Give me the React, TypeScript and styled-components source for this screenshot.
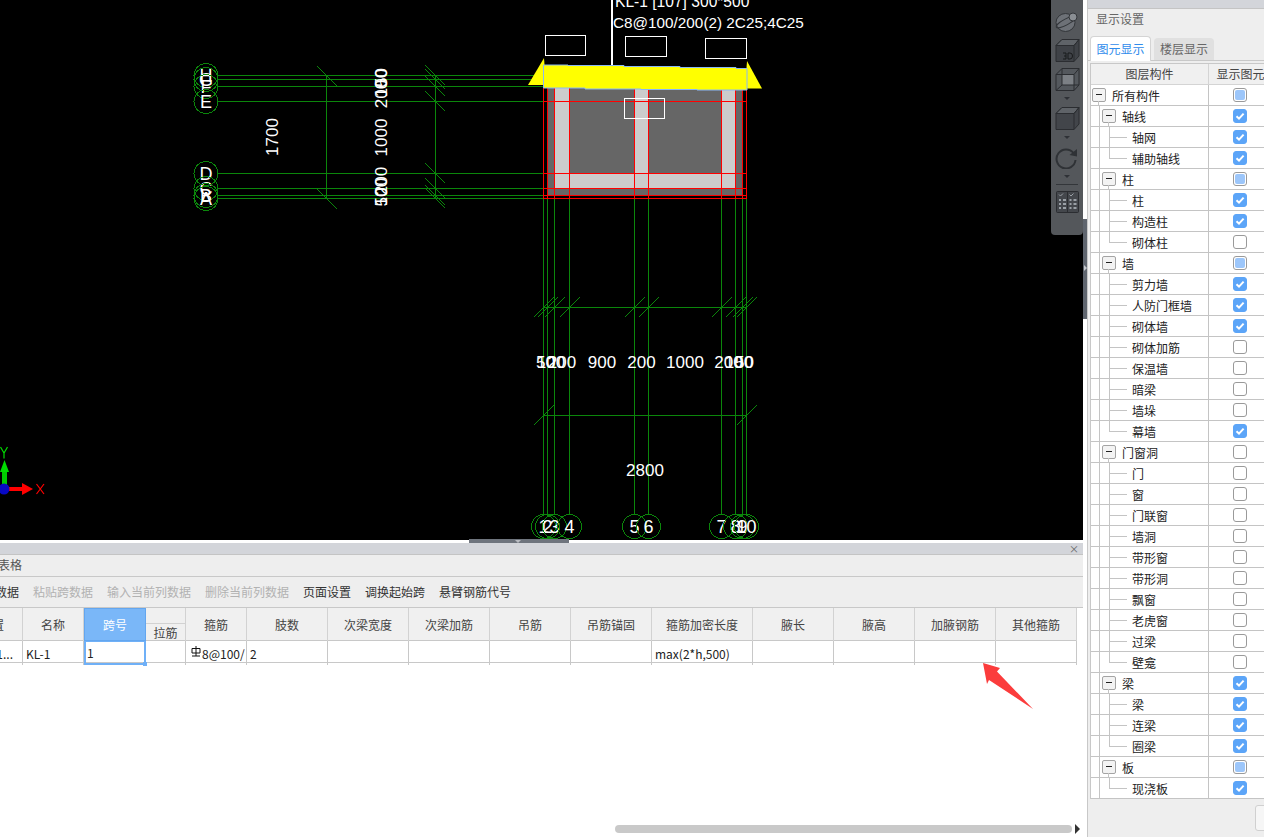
import React from "react";
import styled, { createGlobalStyle } from "styled-components";

const GlobalStyle = createGlobalStyle`
  html, body {
    margin: 0;
    height: 100%;
    overflow: hidden;
    background: #fff;
    font-family: "Noto Sans CJK SC", "Noto Sans", sans-serif;
    font-size: 12px;
    color: #333;
  }
`;

const Page = styled.div`
  display: flex;
  width: 1264px;
  height: 837px;
  overflow: hidden;
`;

const Main = styled.div`
  width: 1083px;
  flex: none;
  display: flex;
  flex-direction: column;
  overflow: hidden;
  position: relative;
`;

const Viewport = styled.div`
  position: relative;
  height: 540px;
  flex: none;
  background: #000;
  overflow: hidden;
`;

const Drawing = styled.svg`
  display: block;
  width: 1083px;
  height: 540px;
`;

const CadText = styled.text<{ $size?: number }>`
  font-family: "Liberation Sans", sans-serif;
  font-size: ${(p) => p.$size ?? 17}px;
  fill: #fff;
  text-anchor: middle;
`;

const CadLabel = styled(CadText)`
  text-anchor: start;
`;

const ViewTools = styled.div`
  position: absolute;
  top: 0;
  right: 0;
  width: 32px;
  height: 235px;
  background: #54575b;
  border-radius: 0 0 4px 4px;
  display: flex;
  flex-direction: column;
  align-items: center;
`;

const ToolIcon = styled.svg<{ $h: number; $top: number }>`
  display: block;
  width: 26px;
  height: ${(p) => p.$h}px;
  margin-top: ${(p) => p.$top}px;
  flex: none;
`;

const Caret = styled.div`
  width: 0;
  height: 0;
  margin-top: 6px;
  border-left: 3px solid transparent;
  border-right: 3px solid transparent;
  border-top: 3px solid #2e3136;
  flex: none;
`;

const ToolRule = styled.div`
  width: 22px;
  height: 1px;
  background: #33363a;
  margin: 6px 0 0;
  flex: none;
`;

const SplitHandle = styled.div`
  position: absolute;
  top: 539px;
  left: 469px;
  width: 100px;
  height: 4px;
  background: #6e747d;
  z-index: 2;

  &::after {
    content: "";
    position: absolute;
    left: 46px;
    top: 1px;
    border-left: 3px solid transparent;
    border-right: 3px solid transparent;
    border-top: 3px solid #b9bcc2;
  }
`;

const Grip = styled.div`
  height: 3px;
  flex: none;
  background: #fff;
`;

const PanelBar = styled.div`
  height: 11px;
  flex: none;
  background: #d3d5da;
  border-bottom: 1px solid #c4c4c4;
  display: flex;
  justify-content: flex-end;
  align-items: center;
  padding-right: 4px;
  font-size: 10px;
  line-height: 11px;
  color: #666;
`;

const TitleRow = styled.div`
  height: 21px;
  flex: none;
  background: #eee;
  border-bottom: 1px solid #c8c8c8;
  line-height: 20px;
  color: #555;
  padding-left: 0;
  text-indent: -2px;
`;

const ActionBar = styled.div`
  height: 30px;
  flex: none;
  background: #eee;
  border-bottom: 1px solid #c8c8c8;
  display: flex;
  align-items: center;
  gap: 14px;
  margin-left: -41px;
  line-height: 30px;
  white-space: nowrap;
`;

const Action = styled.span<{ $off?: boolean }>`
  color: ${(p) => (p.$off ? "#b2b2b2" : "#333")};
`;

const Sheet = styled.div`
  flex: 1;
  background: #fff;
  position: relative;
  overflow: hidden;
`;

const columns = "61px 61px 62px 40px 61px 81px 81px 81px 81px 81px 101px 81px 81px 81px 81px";

const HeadRow = styled.div`
  display: grid;
  grid-template-columns: ${columns};
  margin-left: -38px;
  width: 1115px;
  height: 33px;
  background: #f0f0f0;
  border-bottom: 1px solid #c8c8c8;
  box-sizing: border-box;
`;

const HeadCell = styled.div<{ $on?: boolean }>`
  box-sizing: border-box;
  display: flex;
  align-items: center;
  justify-content: center;
  border-right: 1px solid #d2d2d2;
  color: ${(p) => (p.$on ? "#fff" : "#444")};
  background: ${(p) => (p.$on ? "#7ab7f8" : "transparent")};
  ${(p) => p.$on && "border: 1px solid #63a6ef;"}
`;

const SplitHead = styled.div`
  box-sizing: border-box;
  display: flex;
  flex-direction: column;
  border-right: 1px solid #d2d2d2;
`;

const SplitTop = styled.div`
  height: 15px;
  flex: none;
  border-bottom: 1px solid #d2d2d2;
`;

const SplitBottom = styled.div`
  flex: 1;
  display: flex;
  align-items: center;
  justify-content: center;
  color: #444;
`;

const DataRow = styled.div`
  display: grid;
  grid-template-columns: ${columns};
  margin-left: -38px;
  width: 1115px;
  height: 22px;
  border-bottom: 1px solid #c8c8c8;
  box-sizing: border-box;
`;

const DataCell = styled.div`
  box-sizing: border-box;
  border-right: 1px solid #c8c8c8;
  padding-left: 3px;
  line-height: 21px;
  color: #222;
  white-space: nowrap;
  overflow: hidden;
  display: flex;
  align-items: center;
`;

const FirstCell = styled(DataCell)`
  justify-content: flex-end;
  padding: 0 9px 0 0;
`;

const ActiveCell = styled(DataCell)`
  border: 2px solid #6fb0f7;
  border-top-width: 1px;
  position: relative;
  overflow: visible;
  padding-left: 1px;

  &::after {
    content: "";
    position: absolute;
    right: -3px;
    bottom: -3px;
    width: 4px;
    height: 4px;
    background: #6fb0f7;
  }
`;

const Rebar = styled.svg`
  display: block;
  width: 10px;
  height: 12px;
  margin: 0 1px 3px 2px;
  flex: none;
`;

const ScrollThumb = styled.div`
  position: absolute;
  left: 615px;
  bottom: 4px;
  width: 457px;
  height: 8px;
  border-radius: 4px;
  background: #c9c9c9;
`;

const ScrollArrow = styled.div`
  position: absolute;
  left: 1075px;
  bottom: 3px;
  border-top: 5px solid transparent;
  border-bottom: 5px solid transparent;
  border-left: 5px solid #333;
`;

const Callout = styled.svg`
  position: absolute;
  left: 975px;
  top: 655px;
  width: 65px;
  height: 60px;
  z-index: 3;
`;

const Divider = styled.div`
  width: 5px;
  flex: none;
  background: #fff;
  border-right: 1px solid #c8c8c8;
  box-sizing: border-box;
  position: relative;
`;

const SideHandle = styled.div`
  position: absolute;
  left: 0;
  top: 219px;
  width: 4px;
  height: 100px;
  background: #5f656e;

  &::after {
    content: "";
    position: absolute;
    left: 1px;
    top: 46px;
    border-top: 3px solid transparent;
    border-bottom: 3px solid transparent;
    border-left: 3px solid #c4c7cc;
  }
`;

const Side = styled.div`
  flex: 1;
  min-width: 0;
  background: #eee;
  display: flex;
  flex-direction: column;
  overflow: hidden;
  position: relative;
`;

const SideTop = styled.div`
  height: 8px;
  flex: none;
  background: #d3d5da;
  border-bottom: 1px solid #c4c4c4;
`;

const SideTitle = styled.div`
  height: 21px;
  flex: none;
  line-height: 20px;
  padding-left: 8px;
  color: #666;
`;

const Tabs = styled.div`
  height: 25px;
  margin-top: 6px;
  flex: none;
  display: flex;
  align-items: flex-end;
  gap: 3px;
  padding-left: 2px;
  border-bottom: 1px solid #c8c8c8;
  box-sizing: border-box;
`;

const Tab = styled.div<{ $on?: boolean }>`
  box-sizing: border-box;
  width: ${(p) => (p.$on ? 61 : 60)}px;
  height: ${(p) => (p.$on ? 25 : 22)}px;
  text-align: center;
  line-height: ${(p) => (p.$on ? 23 : 22)}px;
  border-radius: 4px 4px 0 0;
  color: ${(p) => (p.$on ? "#2f8cec" : "#666")};
  background: ${(p) => (p.$on ? "#fff" : "#e0e0e0")};
  ${(p) => p.$on && "border: 1px solid #d4d4d4; border-bottom: 0; margin-bottom: -1px;"}
`;

const Layers = styled.div`
  margin: 2px 0 0 2px;
  width: 182px;
  flex: none;
  background: #fff;
  border-top: 1px solid #c8c8c8;
  border-left: 1px solid #c8c8c8;
`;

const LayerHead = styled.div`
  display: grid;
  grid-template-columns: 118px 64px;
  height: 21px;
  background: #f0f0f0;
  border-bottom: 1px solid #d4d4d4;
  box-sizing: border-box;
  line-height: 20px;
  text-align: center;
  color: #444;
`;

const LayerHeadCell = styled.div`
  border-right: 1px solid #d4d4d4;
  white-space: nowrap;
  overflow: hidden;
`;

const LayerRow = styled.div`
  display: grid;
  grid-template-columns: 118px 64px;
  height: 21px;
  box-sizing: border-box;
  border-bottom: 1px solid #c4c4c4;
`;

const TreeCell = styled.div`
  display: flex;
  align-items: center;
  padding-left: 8px;
  border-right: 1px solid #c4c4c4;
  color: #222;
  white-space: nowrap;
`;

const Spine = styled.div`
  align-self: stretch;
  width: 10px;
  flex: none;
  box-sizing: border-box;
  border-left: 1px solid #c4c4c4;
  margin-bottom: -1px;
`;

const Branch = styled.div<{ $last?: boolean }>`
  align-self: stretch;
  width: 18px;
  flex: none;
  position: relative;
  margin-bottom: -1px;

  &::before {
    content: "";
    position: absolute;
    left: 0;
    top: 0;
    width: 1px;
    height: ${(p) => (p.$last ? "50%" : "100%")};
    background: #c4c4c4;
  }

  &::after {
    content: "";
    position: absolute;
    left: 0;
    right: 0;
    top: 10px;
    height: 1px;
    background: #c4c4c4;
  }
`;

const Expander = styled.div`
  box-sizing: border-box;
  width: 14px;
  height: 14px;
  margin-left: -7px;
  flex: none;
  border: 1px solid #a4a4a4;
  border-radius: 2px;
  background: #f3f3f3;
  position: relative;

  &::before {
    content: "";
    position: absolute;
    left: 3px;
    top: 5px;
    width: 6px;
    height: 1px;
    background: #222;
  }

  &::after {
    content: "";
    position: absolute;
    left: 5px;
    top: 12px;
    width: 1px;
    height: 5px;
    background: #c4c4c4;
  }
`;

const NodeText = styled.span<{ $gap: number }>`
  margin-left: ${(p) => p.$gap}px;
`;

const CheckCell = styled.div`
  display: flex;
  align-items: center;
  padding-left: 24px;
  box-sizing: border-box;
`;

type CheckState = "on" | "off" | "part";

const CheckBox = styled.div<{ $state: CheckState }>`
  box-sizing: border-box;
  width: 14px;
  height: 14px;
  border-radius: 3px;
  display: flex;
  align-items: center;
  justify-content: center;
  background: ${(p) => (p.$state === "on" ? "#5ca5f8" : "#fff")};
  border: 1px solid ${(p) => (p.$state === "on" ? "#5ca5f8" : "#9a9a9a")};

  ${(p) =>
    p.$state === "part" &&
    `&::before {
      content: "";
      width: 10px;
      height: 10px;
      border-radius: 2px;
      background: #9cc6fa;
    }`}
`;

const Footer = styled.div`
  flex: 1;
  position: relative;
`;

const FootButton = styled.div`
  position: absolute;
  left: 167px;
  top: 6px;
  width: 40px;
  height: 26px;
  box-sizing: border-box;
  border: 1px solid #d0d0d0;
  border-radius: 3px;
  background: #f6f6f6;
`;

const GREEN = "#0b860b";
const gridX = [543.5, 547.5, 554.5, 569.5, 634.5, 648.5, 721.5, 735.5, 742.5, 746.5];
const gridY = [75.5, 79.5, 86.5, 101.5, 173.5, 188.5, 195.5, 198.5];
const rowNames = ["H", "G", "F", "E", "D", "C", "B", "A"];

const tick = (x: number, y: number, k: string, dir = 1) => (
  <line key={k} x1={x - 10} y1={y + 10 * dir} x2={x + 10} y2={y - 10 * dir} stroke={GREEN} />
);

const Rect = ({ x, y, w, h }: { x: number; y: number; w: number; h: number }) => (
  <rect x={x} y={y} width={w} height={h} fill="none" stroke="#fff" />
);

const Check = () => (
  <svg width="10" height="10" viewBox="0 0 10 10">
    <path d="M1.5 5.2 L4 7.6 L8.6 2.6" fill="none" stroke="#fff" strokeWidth="2" />
  </svg>
);

type Layer = { name: string; level: 0 | 1 | 2; state: CheckState; last?: boolean };

const layers: Layer[] = [
  { name: "所有构件", level: 0, state: "part" },
  { name: "轴线", level: 1, state: "on" },
  { name: "轴网", level: 2, state: "on" },
  { name: "辅助轴线", level: 2, state: "on", last: true },
  { name: "柱", level: 1, state: "part" },
  { name: "柱", level: 2, state: "on" },
  { name: "构造柱", level: 2, state: "on" },
  { name: "砌体柱", level: 2, state: "off", last: true },
  { name: "墙", level: 1, state: "part" },
  { name: "剪力墙", level: 2, state: "on" },
  { name: "人防门框墙", level: 2, state: "on" },
  { name: "砌体墙", level: 2, state: "on" },
  { name: "砌体加筋", level: 2, state: "off" },
  { name: "保温墙", level: 2, state: "off" },
  { name: "暗梁", level: 2, state: "off" },
  { name: "墙垛", level: 2, state: "off" },
  { name: "幕墙", level: 2, state: "on", last: true },
  { name: "门窗洞", level: 1, state: "off" },
  { name: "门", level: 2, state: "off" },
  { name: "窗", level: 2, state: "off" },
  { name: "门联窗", level: 2, state: "off" },
  { name: "墙洞", level: 2, state: "off" },
  { name: "带形窗", level: 2, state: "off" },
  { name: "带形洞", level: 2, state: "off" },
  { name: "飘窗", level: 2, state: "off" },
  { name: "老虎窗", level: 2, state: "off" },
  { name: "过梁", level: 2, state: "off" },
  { name: "壁龛", level: 2, state: "off", last: true },
  { name: "梁", level: 1, state: "on" },
  { name: "梁", level: 2, state: "on" },
  { name: "连梁", level: 2, state: "on" },
  { name: "圈梁", level: 2, state: "on", last: true },
  { name: "板", level: 1, state: "part" },
  { name: "现浇板", level: 2, state: "on", last: true },
];

const headers = ["次梁宽度", "次梁加筋", "吊筋", "吊筋锚固", "箍筋加密长度", "腋长", "腋高", "加腋钢筋", "其他箍筋"];

const sideDims: [string, number][] = [
  ["50", 77.5],
  ["100", 83],
  ["200", 94],
  ["1000", 137.5],
  ["200", 181],
  ["100", 192],
  ["50", 197],
];

const bottomDims: [string, number][] = [
  ["50", 545.5],
  ["100", 551],
  ["200", 562],
  ["900", 602],
  ["200", 641.5],
  ["1000", 685],
  ["200", 728.5],
  ["100", 739],
  ["50", 744.5],
];

const CadScene = () => (
  <Drawing viewBox="0 0 1083 540">
    {/* column body */}
    <rect x={547} y={88} width={195} height={107} fill="#666" />
    <rect x={554} y={88} width={15} height={100} fill="#ccc" />
    <rect x={634} y={88} width={14} height={100} fill="#ccc" />
    <rect x={721} y={88} width={14} height={100} fill="#ccc" />
    <rect x={554} y={173} width={181} height={15} fill="#ccc" />

    {/* grid lines */}
    <g shapeRendering="crispEdges" stroke={GREEN}>
      {gridY.map((y) => (
        <line key={y} x1={218} y1={y} x2={544} y2={y} />
      ))}
      {gridX.map((x) => (
        <line key={x} x1={x} y1={198} x2={x} y2={515} />
      ))}
      <line x1={326.5} y1={75} x2={326.5} y2={199} />
      <line x1={435.5} y1={75} x2={435.5} y2={199} />
      <line x1={543} y1={307.5} x2={747} y2={307.5} />
      <line x1={543} y1={415.5} x2={747} y2={415.5} />
    </g>
    <g shapeRendering="crispEdges">
      {tick(327, 76, "a", -1)}
      {tick(327, 199, "b", -1)}
      {gridY.map((y) => tick(435.5, y, `r${y}`, -1))}
      {gridX.map((x) => tick(x, 307.5, `t${x}`))}
      {tick(543.5, 415.5, "c")}
      {tick(746.5, 415.5, "d")}
    </g>

    {/* red section lines */}
    <g shapeRendering="crispEdges" stroke="#f00">
      {gridX.map((x) => (
        <line key={x} x1={x} y1={88} x2={x} y2={198} />
      ))}
      {gridY.slice(3).map((y) => (
        <line key={y} x1={543} y1={y} x2={747} y2={y} />
      ))}
    </g>

    {/* beam */}
    <polygon points="544,58 546,85 528,85" fill="#ff0" />
    <polygon points="747,61 762,88.5 745,88.5" fill="#ff0" />
    <path
      d="M543.5 65 H568 V65.5 H624 V66.5 H680 V67.5 H736 V68.5 H747 V90 H697 V89.5 H641 V89 H585 V88 H543.5 Z"
      fill="#ff0"
      stroke="#8ab8f5"
    />

    <line x1={612} y1={0} x2={612} y2={65} stroke="#fff" strokeWidth={2} />
    <CadLabel x={615} y={7} $size={15.6}>KL-1 [107] 300*500</CadLabel>
    <CadLabel x={613} y={28} $size={15.3}>C8@100/200(2) 2C25;4C25</CadLabel>

    <Rect x={545.5} y={35.5} w={40} h={20} />
    <Rect x={625.5} y={36.5} w={41} h={20} />
    <Rect x={705.5} y={38.5} w={41} h={20} />
    <Rect x={624.5} y={98.5} w={40} h={20} />

    {/* axis bubbles */}
    {gridY.map((y, i) => (
      <g key={y}>
        <circle cx={206} cy={y} r={12} fill="none" stroke={GREEN} shapeRendering="crispEdges" />
        <CadText x={206} y={y + 6} $size={18}>{rowNames[i]}</CadText>
      </g>
    ))}
    {gridX.map((x, i) => (
      <g key={x}>
        <circle cx={x} cy={526.5} r={12} fill="none" stroke={GREEN} shapeRendering="crispEdges" />
        <CadText x={x} y={533} $size={18}>{i + 1}</CadText>
      </g>
    ))}

    {/* dimensions */}
    <CadText transform="translate(278 137) rotate(-90)">1700</CadText>
    {sideDims.map(([t, y], i) => (
      <CadText key={i} transform={`translate(387 ${y}) rotate(-90)`}>{t}</CadText>
    ))}
    {bottomDims.map(([t, x], i) => (
      <CadText key={i} x={x} y={368}>{t}</CadText>
    ))}
    <CadText x={645} y={476}>2800</CadText>

    {/* ucs */}
    <path d="M0.5 447 L4 453 L7.5 447 M4 453 V458.5" fill="none" stroke="#0d0" strokeWidth={1.2} />
    <rect x={2} y={471} width={5} height={14} fill="#0c0" />
    <polygon points="4.5,460 9,472 0,472" fill="#0d0" />
    <rect x={8} y={487} width={15} height={4} fill="#f00" />
    <polygon points="22,483 33,489 22,495" fill="#f00" />
    <circle cx={4} cy={489} r={5.5} fill="#0808c4" />
    <path d="M36.5 484 L44 494 M44 484 L36.5 494" fill="none" stroke="#f00" strokeWidth={1.2} />
  </Drawing>
);

const Tools = () => (
  <ViewTools>
    <ToolIcon $h={20} $top={12} viewBox="0 0 26 20">
      <ellipse cx="11.5" cy="10.5" rx="9.5" ry="9" fill="#6d7177" stroke="#33363a" />
      <ellipse cx="12" cy="10" rx="11" ry="3" transform="rotate(-28 12 10)" fill="none" stroke="#33363a" />
      <circle cx="19" cy="5" r="4" fill="#8a8e93" stroke="#33363a" />
    </ToolIcon>
    <ToolIcon $h={23} $top={7} viewBox="0 0 26 23">
      <path d="M2 6.5 L8 .5 H25 V17 L20 22.5 H2 Z" fill="#3f4247" stroke="#2b2d31" />
      <path d="M2 6.5 L8 .5 H25 L20 6.5 Z" fill="#5f6368" stroke="#2b2d31" />
      <path d="M20 6.5 V22.5 M20 6.5 L25 .5" fill="none" stroke="#2b2d31" />
      <path d="M9 14 H12 V17 H10 M12 17 V20 H9 M14 14 H16 Q18.5 14 18.5 17 Q18.5 20 16 20 H14 Z" fill="none" stroke="#191a1c" strokeWidth="1" />
    </ToolIcon>
    <ToolIcon $h={23} $top={6} viewBox="0 0 26 23">
      <path d="M2 6.5 L8 .5 H25 V17 L20 22.5 H2 Z" fill="#54585d" stroke="#2b2d31" />
      <rect x="8" y="6.5" width="12" height="10.5" fill="#7c8085" />
      <path d="M2 6.5 H20 V22.5 M20 6.5 L25 .5 M8 .5 V17 H25 M8 17 L2 22.5" fill="none" stroke="#2b2d31" />
    </ToolIcon>
    <Caret />
    <ToolIcon $h={23} $top={7} viewBox="0 0 26 23">
      <path d="M2 6.5 L8 .5 H25 V17 L20 22.5 H2 Z" fill="#42454a" stroke="#2b2d31" />
      <path d="M2 6.5 L8 .5 H25 L20 6.5 Z" fill="#5f6368" stroke="#2b2d31" />
      <path d="M20 6.5 V22.5 M20 6.5 L25 .5" fill="none" stroke="#2b2d31" />
    </ToolIcon>
    <Caret />
    <ToolIcon $h={21} $top={9} viewBox="0 0 26 21">
      <path d="M19.5 5 A9.5 9.5 0 1 0 21.5 12" fill="none" stroke="#2f3236" strokeWidth="2" />
      <polygon points="23,1 23,8.5 15.5,7" fill="#2f3236" />
    </ToolIcon>
    <Caret />
    <ToolRule />
    <ToolIcon $h={22} $top={6} viewBox="0 0 26 22">
      <rect x="2.5" y="0.5" width="22" height="21" rx="1" fill="#44474c" stroke="#2b2d31" />
      <path d="M13.5 1 V21" stroke="#2b2d31" />
      <path d="M5 3.5 L6.5 5 L9 2.5 M15.5 3.5 L17 5 L19.5 2.5" fill="none" stroke="#9aa0a6" />
      <path
        d="M5 9 H7 M9 9 H12 M5 13 H7 M9 13 H12 M5 17 H7 M9 17 H12 M15.5 9 H17.5 M19.5 9 H22.5 M15.5 13 H17.5 M19.5 13 H22.5 M15.5 17 H17.5 M19.5 17 H22.5"
        stroke="#9aa0a6"
        strokeWidth="2"
      />
    </ToolIcon>
  </ViewTools>
);

const LayerLine = ({ layer }: { layer: Layer }) => (
  <LayerRow>
    <TreeCell>
      {layer.level === 0 && <Expander />}
      {layer.level === 1 && <Spine />}
      {layer.level === 1 && <Expander />}
      {layer.level === 2 && <Spine />}
      {layer.level === 2 && <Branch $last={layer.last} />}
      <NodeText $gap={layer.level === 2 ? 5 : 6}>{layer.name}</NodeText>
    </TreeCell>
    <CheckCell>
      <CheckBox $state={layer.state}>{layer.state === "on" && <Check />}</CheckBox>
    </CheckCell>
  </LayerRow>
);

export default function App() {
  return (
    <Page>
      <GlobalStyle />
      <Main>
        <Viewport>
          <CadScene />
          <Tools />
        </Viewport>
        <SplitHandle />
        <Grip />
        <PanelBar>×</PanelBar>
        <TitleRow>表格</TitleRow>
        <ActionBar>
          <Action>复制跨数据</Action>
          <Action $off>粘贴跨数据</Action>
          <Action $off>输入当前列数据</Action>
          <Action $off>删除当前列数据</Action>
          <Action>页面设置</Action>
          <Action>调换起始跨</Action>
          <Action>悬臂钢筋代号</Action>
        </ActionBar>
        <Sheet>
          <HeadRow>
            <HeadCell>位置</HeadCell>
            <HeadCell>名称</HeadCell>
            <HeadCell $on>跨号</HeadCell>
            <SplitHead>
              <SplitTop />
              <SplitBottom>拉筋</SplitBottom>
            </SplitHead>
            <HeadCell>箍筋</HeadCell>
            <HeadCell>肢数</HeadCell>
            {headers.map((h) => (
              <HeadCell key={h}>{h}</HeadCell>
            ))}
          </HeadRow>
          <DataRow>
            <FirstCell>1...</FirstCell>
            <DataCell>KL-1</DataCell>
            <ActiveCell>1</ActiveCell>
            <DataCell />
            <DataCell>
              <Rebar viewBox="0 0 10 12">
                <path d="M1 2.5 H9 V7 H1 Z M5 0 V10 M1 10 H9" fill="none" stroke="#111" />
              </Rebar>
              8@100/
            </DataCell>
            <DataCell>2</DataCell>
            <DataCell />
            <DataCell />
            <DataCell />
            <DataCell />
            <DataCell>max(2*h,500)</DataCell>
            <DataCell />
            <DataCell />
            <DataCell />
            <DataCell />
          </DataRow>
          <ScrollThumb />
          <ScrollArrow />
        </Sheet>
        <Callout viewBox="0 0 65 60">
          <polygon points="8,8 25,13 22,16.5 58,54 14,25 12,29" fill="#fb3c3c" />
        </Callout>
      </Main>
      <Divider>
        <SideHandle />
      </Divider>
      <Side>
        <SideTop />
        <SideTitle>显示设置</SideTitle>
        <Tabs>
          <Tab $on>图元显示</Tab>
          <Tab>楼层显示</Tab>
        </Tabs>
        <Layers>
          <LayerHead>
            <LayerHeadCell>图层构件</LayerHeadCell>
            <LayerHeadCell>显示图元</LayerHeadCell>
          </LayerHead>
          {layers.map((l, i) => (
            <LayerLine key={i} layer={l} />
          ))}
        </Layers>
        <Footer>
          <FootButton />
        </Footer>
      </Side>
    </Page>
  );
}
